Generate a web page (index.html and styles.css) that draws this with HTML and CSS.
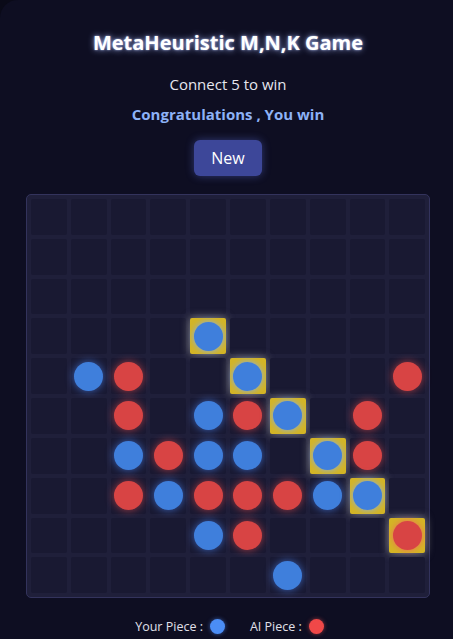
FILE: index.html
```html
<!DOCTYPE html>
<html>
<head>
<meta charset="utf-8">
<link rel="stylesheet" href="styles.css">
</head>
<body>
<div class="app">
  <h1 class="title">MetaHeuristic M,N,K Game</h1>
  <p class="subtitle">Connect 5 to win</p>
  <p class="status">Congratulations , You win</p>
  <button class="btn-new">New</button>
  <div class="board" id="board"></div>
  <div class="legend">
    <span class="legend-item">Your Piece : <span class="dot dot-you"></span></span>
    <span class="legend-item">AI Piece : <span class="dot dot-ai"></span></span>
  </div>
</div>
<script src="app.js"></script>
</body>
</html>
```
FILE: app.js
```js
var grid = [
  "..........",
  "..........",
  "..........",
  "....B.....",
  ".BR..B...R",
  "..R.BRB.R.",
  "..BRBB.BR.",
  "..RBRRRBB.",
  "....BR...R",
  "......B..."
];
var win = {"3,4":1,"4,5":1,"5,6":1,"6,7":1,"7,8":1,"8,9":1};
var board = document.getElementById("board");
for (var r = 0; r < 10; r++) {
  for (var c = 0; c < 10; c++) {
    var cell = document.createElement("div");
    cell.className = "cell" + (win[r + "," + c] ? " cell-win" : "");
    var ch = grid[r][c];
    if (ch !== ".") {
      var p = document.createElement("div");
      p.className = "piece " + (ch === "B" ? "piece-you" : "piece-ai");
      cell.appendChild(p);
    }
    board.appendChild(cell);
  }
}
```
FILE: styles.css
```css
* { box-sizing: border-box; }
html, body {
  margin: 0;
  padding: 0;
  background: #0a0a18;
}
.app {
  min-height: 639px;
  background: #0e0e22;
  border-radius: 18px 0 0 0;
  display: flex;
  flex-direction: column;
  align-items: center;
  padding: 27px 0 0 3px;
  font-family: "Open Sans", "Noto Sans", sans-serif;
  color: #e8e8f0;
}
.title {
  margin: 0;
  font-size: 20px;
  font-weight: 700;
  line-height: 32px;
  color: #ffffff;
  text-shadow: 0 0 6px rgba(170, 190, 255, 0.9), 0 0 2px rgba(200, 210, 255, 0.8);
}
.subtitle {
  margin: 15px 0 0;
  font-size: 15px;
  line-height: 20px;
  color: #e6e6ee;
}
.status {
  margin: 10px 0 0;
  font-size: 15px;
  line-height: 20px;
  font-weight: 700;
  color: #8db2f7;
}
.btn-new {
  margin-top: 16px;
  width: 68px;
  height: 36px;
  border: none;
  border-radius: 6px;
  background: #3d4799;
  color: #ffffff;
  font-family: "Open Sans", "Noto Sans", sans-serif;
  font-size: 16px;
  box-shadow: 0 0 8px rgba(90, 110, 220, 0.45);
}
.board {
  margin-top: 18px;
  width: 404px;
  padding: 4px;
  border: 1px solid #33335c;
  border-radius: 5px;
  background: #1f1f3a;
  display: grid;
  grid-template-columns: repeat(10, 1fr);
  gap: 4px;
}
.cell {
  aspect-ratio: 1;
  border-radius: 2px;
  background: #191932;
  display: flex;
  align-items: center;
  justify-content: center;
}
.cell-win {
  background: #d4b525;
  box-shadow: 0 0 10px rgba(230, 230, 210, 0.55);
}
.piece {
  width: 29px;
  height: 29px;
  border-radius: 50%;
}
.piece-you {
  background: #3f7fdc;
  box-shadow: 0 0 8px rgba(80, 140, 255, 0.65);
}
.piece-ai {
  background: #d84444;
  box-shadow: 0 0 8px rgba(240, 80, 80, 0.65);
}
.cell-win .piece-you {
  box-shadow: 0 0 6px rgba(120, 170, 255, 0.9);
}
.cell-win .piece-ai {
  box-shadow: 0 0 6px rgba(240, 100, 100, 0.9);
}
.legend {
  margin-top: 20px;
  display: flex;
  gap: 25px;
  font-size: 12.5px;
  color: #e0e0ea;
  padding-left: 3px;
}
.legend-item {
  display: flex;
  align-items: center;
  gap: 7px;
}
.dot {
  width: 15px;
  height: 15px;
  border-radius: 50%;
  display: inline-block;
}
.dot-you {
  background: #4b8df5;
  box-shadow: 0 0 4px rgba(80, 140, 255, 0.6);
}
.dot-ai {
  background: #f04848;
  box-shadow: 0 0 4px rgba(240, 80, 80, 0.6);
}
```
